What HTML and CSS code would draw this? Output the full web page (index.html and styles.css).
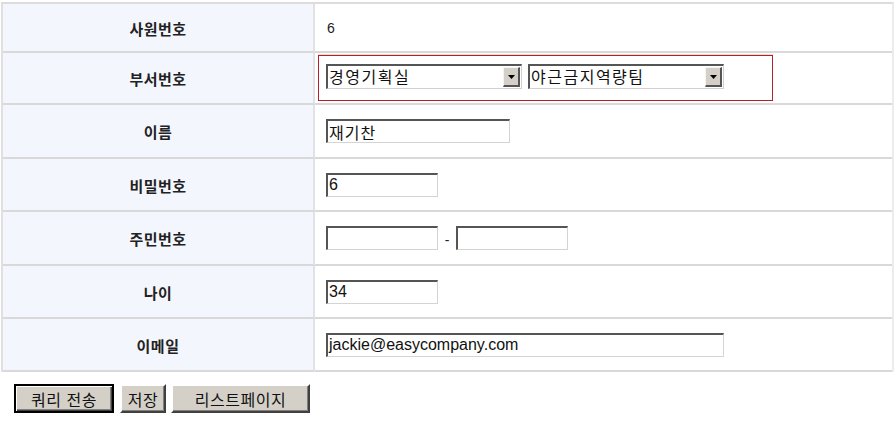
FILE: index.html
```html
<!DOCTYPE html>
<html lang="ko">
<head>
<meta charset="utf-8">
<title>사원 정보 수정</title>
<link rel="stylesheet" href="styles.css">
</head>
<body>
<form class="emp-form">
  <div class="grid">
    <div class="label r1">사원번호</div>
    <div class="value r1"><span class="plain">6</span></div>

    <div class="label r2">부서번호</div>
    <div class="value r2 tight">
      <div class="dept-box">
        <span class="sel"><span class="sel-text">경영기획실</span><span class="sel-btn"><svg width="7" height="4" viewBox="0 0 7 4"><path d="M0 0H7L3.5 4Z" fill="#000"/></svg></span></span>
        <span class="sel"><span class="sel-text">야근금지역량팀</span><span class="sel-btn"><svg width="7" height="4" viewBox="0 0 7 4"><path d="M0 0H7L3.5 4Z" fill="#000"/></svg></span></span>
      </div>
    </div>

    <div class="label r3">이름</div>
    <div class="value r3"><span class="inp w184 ko">재기찬</span></div>

    <div class="label r4">비밀번호</div>
    <div class="value r4"><span class="inp w112">6</span></div>

    <div class="label r5">주민번호</div>
    <div class="value r5"><span class="inp w112"></span><span class="dash">-</span><span class="inp w112"></span></div>

    <div class="label r6">나이</div>
    <div class="value r6"><span class="inp w112">34</span></div>

    <div class="label r7">이메일</div>
    <div class="value r7"><span class="inp w398">jackie@easycompany.com</span></div>
  </div>

  <div class="actions">
    <button type="button" class="btn default">쿼리 전송</button>
    <button type="button" class="btn save">저장</button>
    <button type="button" class="btn wide">리스트페이지</button>
  </div>
</form>
</body>
</html>
```

FILE: styles.css
```css
html, body {
  margin: 0;
  padding: 0;
  background: #ffffff;
}

body {
  font-family: "Noto Sans CJK KR", "Liberation Sans", sans-serif;
  color: #222;
}

.emp-form {
  width: 893px;
  margin: 2px 0 0 1px;
}

.grid {
  display: grid;
  grid-template-columns: 312px 1fr;
  grid-template-rows: 49px 52px 54px 53px 54px 53px 53px;
  border-top: 2px solid #dcdcdc;
  border-left: 2px solid #e0e0e0;
  border-right: 2px solid #ececec;
}

.label,
.value {
  box-sizing: border-box;
  border-bottom: 2px solid #d9d9d9;
  display: flex;
  align-items: center;
}

.label {
  background: #f4f6fe;
  border-right: 2px solid #e2e2e6;
  justify-content: center;
  font-size: 15px;
  letter-spacing: 0.5px;
  font-weight: bold;
  color: #222;
  padding-top: 1px;
}

.value {
  background: #ffffff;
  padding-left: 11px;
}

.value.tight {
  padding-left: 3px;
}

.plain {
  font-family: "Liberation Sans", Arial, sans-serif;
  font-size: 14px;
  color: #222;
  margin-left: 1px;
}

.dept-box {
  box-sizing: border-box;
  width: 455px;
  height: 46px;
  border: 1px solid #b3202b;
  box-shadow: 0 -1px 0 #f6d9cf;
  display: flex;
  align-items: flex-start;
  gap: 6px;
  padding: 8px 0 0 7px;
}

.sel {
  box-sizing: border-box;
  width: 196px;
  height: 25px;
  display: flex;
  align-items: center;
  background: #fff;
  border-top: 2px solid #555;
  border-left: 2px solid #555;
  border-right: 1px solid #d0d0d0;
  border-bottom: 1px solid #d0d0d0;
}

.sel-text {
  flex: 1;
  font-size: 16px;
  letter-spacing: 1.5px;
  line-height: normal;
  color: #111;
  padding-left: 1px;
  margin-top: -2px;
  white-space: nowrap;
}

.sel-btn {
  box-sizing: border-box;
  flex: none;
  width: 17px;
  height: 20px;
  margin-right: 1px;
  background: #d4d0c8;
  border-top: 1px solid #f4f4f4;
  border-left: 1px solid #f4f4f4;
  border-right: 2px solid #555;
  border-bottom: 2px solid #555;
  display: flex;
  align-items: center;
  justify-content: center;
}

.inp {
  box-sizing: border-box;
  display: inline-flex;
  align-items: center;
  height: 24px;
  background: #fff;
  border-top: 2px solid #555;
  border-left: 2px solid #555;
  border-right: 1px solid #d4d4d4;
  border-bottom: 1px solid #d4d4d4;
  font-family: "Liberation Sans", Arial, sans-serif;
  font-size: 16px;
  color: #111;
  padding-left: 1px;
  white-space: nowrap;
}

.inp.ko {
  font-family: "Noto Sans CJK KR", sans-serif;
  font-size: 16px;
  letter-spacing: 1px;
}

.w112 { width: 112px; }
.w184 { width: 184px; }
.w398 { width: 398px; }

.dash {
  font-family: "Liberation Sans", Arial, sans-serif;
  font-size: 14px;
  width: 18px;
  text-align: center;
  padding-top: 4px;
  color: #222;
}

.actions {
  display: flex;
  margin: 12px 0 0 13px;
}

.btn {
  box-sizing: border-box;
  height: 29px;
  padding: 0;
  background: #d4d0c8;
  font-family: "Noto Sans CJK KR", sans-serif;
  font-size: 16px;
  letter-spacing: 0.5px;
  color: #111;
  border-top: 2px solid #ffffff;
  border-left: 2px solid #ffffff;
  border-right: 2px solid #404040;
  border-bottom: 2px solid #404040;
  box-shadow: inset -1px -1px 0 #808080;
  line-height: 1;
  width: 46px;
}

.btn.default {
  width: 100px;
  border: 2px solid #000;
  box-shadow: inset 1px 1px 0 #fff, inset -1px -1px 0 #404040, inset -2px -2px 0 #808080;
  margin-right: 6px;
}

.btn.save {
  margin-right: 5px;
}

.btn.wide {
  width: 139px;
}
```
